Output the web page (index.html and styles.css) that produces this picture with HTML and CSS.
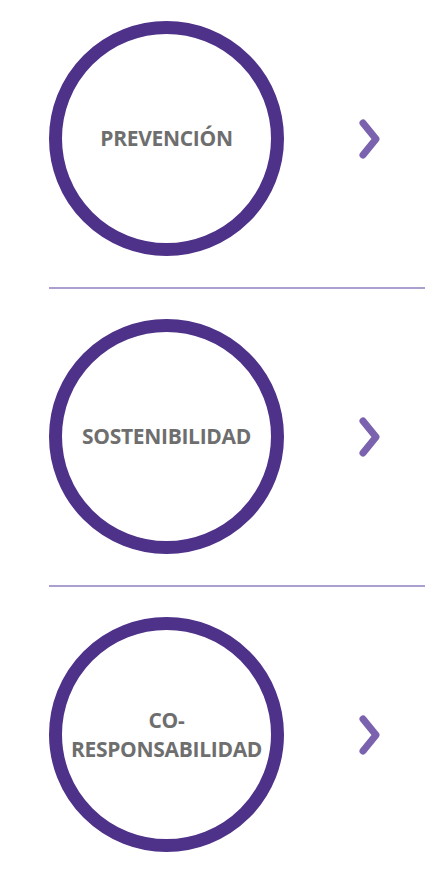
FILE: index.html
```html
<!DOCTYPE html>
<html lang="es">
<head>
<meta charset="utf-8">
<link rel="stylesheet" href="styles.css">
</head>
<body>
<ul class="list">
  <li class="item first">
    <div class="circle"><span class="label">PREVENCIÓN</span></div>
    <svg class="chev" viewBox="0 0 22 40" width="22" height="40"><path d="M4 4 L17 20 L4 36" fill="none" stroke="#7a62ae" stroke-width="7" stroke-linecap="round" stroke-linejoin="round"/></svg>
  </li>
  <li class="item">
    <div class="circle"><span class="label">SOSTENIBILIDAD</span></div>
    <svg class="chev" viewBox="0 0 22 40" width="22" height="40"><path d="M4 4 L17 20 L4 36" fill="none" stroke="#7a62ae" stroke-width="7" stroke-linecap="round" stroke-linejoin="round"/></svg>
  </li>
  <li class="item">
    <div class="circle"><span class="label">CO-<br>RESPONSABILIDAD</span></div>
    <svg class="chev" viewBox="0 0 22 40" width="22" height="40"><path d="M4 4 L17 20 L4 36" fill="none" stroke="#7a62ae" stroke-width="7" stroke-linecap="round" stroke-linejoin="round"/></svg>
  </li>
</ul>
</body>
</html>
```
FILE: styles.css
```css
html, body {
  margin: 0;
  padding: 0;
  background: #ffffff;
}
.list {
  list-style: none;
  margin: 0;
  padding: 0 0 0 49px;
}
.item {
  display: flex;
  align-items: center;
  gap: 75px;
  padding: 30px 0 31px;
  border-top: 2px solid #ab9fd0;
}
.item.first {
  border-top: none;
  padding-top: 21px;
}
.circle {
  box-sizing: border-box;
  width: 235px;
  height: 235px;
  border: 13px solid #4e3189;
  border-radius: 50%;
  display: flex;
  align-items: center;
  justify-content: center;
  text-align: center;
}
.label {
  font-family: "Open Sans", sans-serif;
  font-weight: 700;
  font-size: 21px;
  line-height: 29px;
  color: #6e6e6e;
  letter-spacing: -0.3px;
}
.chev {
  display: block;
}
```
